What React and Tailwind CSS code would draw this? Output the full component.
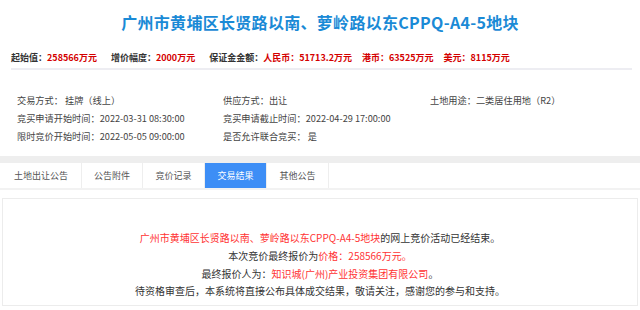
import React from "react";

const tabs = ["土地出让公告", "公告附件", "竞价记录", "交易结果", "其他公告"];
const tabW = ["w-[81px]", "w-[61px]", "w-[62px]", "w-[62px]", "w-[62px]"];

export default function App() {
  return (
    <div
      className="w-[640px] h-[310px] overflow-hidden bg-white text-[#333]"
      style={{ fontFamily: '"Noto Sans CJK SC", "Microsoft YaHei", sans-serif' }}
    >
      {/* header */}
      <div className="pt-[11px] text-center">
        <h1 className="text-[16px] leading-[22px] tracking-[0.3px] font-bold text-[#1a8ad6]">
          广州市黄埔区长贤路以南、萝岭路以东CPPQ-A4-5地块
        </h1>
      </div>
      <div className="mt-[17px] mx-[11px] mr-[8px] pb-[3px] border-b-2 border-[#ededf2] flex items-center text-[9px] leading-[15px] font-bold whitespace-nowrap">
        <span>起始值：<span className="text-[#d40000]">258566万元</span></span>
        <span className="ml-[14px]">增价幅度：<span className="text-[#d40000]">2000万元</span></span>
        <span className="ml-[14px]">保证金金额：<span className="text-[#d40000]">人民币：51713.2万元</span></span>
        <span className="ml-[10px] text-[#d40000]">港币：63525万元</span>
        <span className="ml-[10px] text-[#d40000]">美元：8115万元</span>
      </div>

      {/* info grid */}
      <div className="mt-[21px] pl-[17px] grid grid-cols-[206px_207px_1fr] text-[9.2px] leading-[18px] text-[#444] whitespace-nowrap">
        <div>交易方式： 挂牌（线上）</div>
        <div>供应方式：出让</div>
        <div>土地用途：二类居住用地（R2）</div>
        <div>竞买申请开始时间：2022-03-31 08:30:00</div>
        <div>竞买申请截止时间：2022-04-29 17:00:00</div>
        <div></div>
        <div>限时竞价开始时间：2022-05-05 09:00:00</div>
        <div>是否允许联合竞买： 是</div>
        <div></div>
      </div>

      {/* gray band */}
      <div className="mt-[11px] h-[7px] bg-[#eeeeee]" />

      {/* tabs */}
      <div className="flex h-[27px] bg-white border-b-2 border-[#f2f2f2] pl-[1px]">
        {tabs.map((t, i) => (
          <div
            key={t}
            className={
              tabW[i] +
              " flex items-center justify-center text-[9px] border-r border-[#eeeeee] " +
              (i === 3 ? "bg-[#3d8ef6] text-white" : "text-[#555]")
            }
          >
            {t}
          </div>
        ))}
      </div>

      {/* content */}
      <div className="mt-[8px] mx-[2px] border border-[#ececec] bg-white pt-[30px] pb-[5px] text-center text-[10px] leading-[17.8px] text-[#333]">
        <p>
          <span className="text-[#f33]">广州市黄埔区长贤路以南、萝岭路以东CPPQ-A4-5地块</span>
          的网上竞价活动已经结束。
        </p>
        <p>
          本次竞价最终报价为<span className="text-[#f33]">价格：258566万元。</span>
        </p>
        <p>
          最终报价人为：<span className="text-[#f33]">知识城(广州)产业投资集团有限公司</span>。
        </p>
        <p>待资格审查后，本系统将直接公布具体成交结果，敬请关注，感谢您的参与和支持。</p>
      </div>
    </div>
  );
}
